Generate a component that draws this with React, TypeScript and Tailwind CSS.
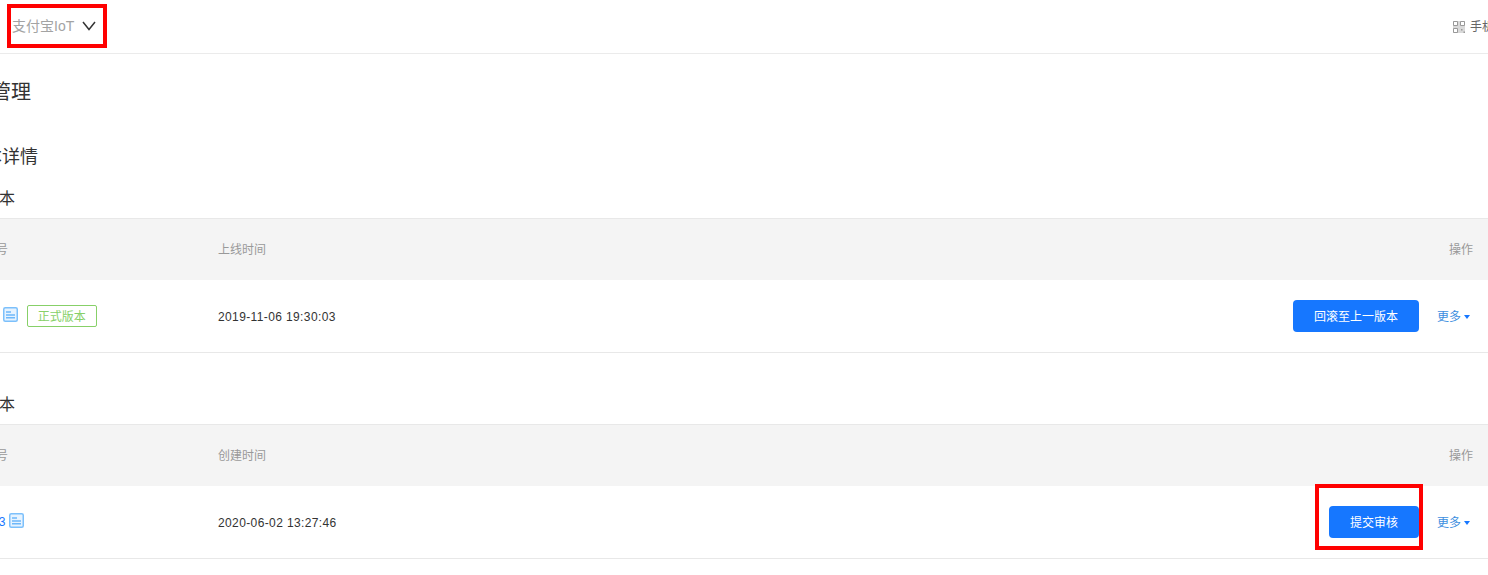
import React from 'react';

const font = { fontFamily: '"Liberation Sans", "Noto Sans CJK SC", sans-serif' };

function DocIcon() {
  return (
    <svg width="15" height="15" viewBox="0 0 15 15" fill="none" className="shrink-0">
      <rect x="0.75" y="0.75" width="13.5" height="13.5" rx="1.5" fill="#e6f3ff" stroke="#7cc0fb" strokeWidth="1.5" />
      <path d="M3 5h5M3 8h9M3 10.7h9" stroke="#6db8fa" strokeWidth="1.4" />
    </svg>
  );
}

function More() {
  return (
    <span className="flex items-center gap-[3px] text-xs text-[#3d8fe0]">
      更多
      <span className="w-0 h-0 border-x-[3px] border-x-transparent border-t-[4px] border-t-[#1677ff] mt-[1px]" />
    </span>
  );
}

function VersionTable({ title, timeLabel, name, time, action, tag, narrow }: {
  title: string; timeLabel: string; name: string; time: string; action: string; tag?: boolean; narrow?: boolean;
}) {
  return (
    <section>
      <h3 className="text-[16px] leading-[24px] text-[#333] pl-[3px]">{title}</h3>
      <div className="mt-[7px] h-[62px] bg-[#f4f4f4] border-t border-[#e8e8e8] flex items-center text-xs text-[#999] pl-[24px] pr-[15px]">
        <span className="w-[246px]">版本号</span>
        <span className="flex-1">{timeLabel}</span>
        <span>操作</span>
      </div>
      <div className="h-[73px] border-b border-[#e8e8e8] flex items-center text-xs text-[#333] pl-[24px] pr-[18px]">
        <div className="w-[246px] flex items-center">
          <span className="text-[#1677ff]">{name}</span>
          <span className="ml-[4px] -mt-[3px]"><DocIcon /></span>
          {tag && (
            <span className="ml-[9px] h-[22px] w-[70px] flex items-center justify-center pt-[1px] border border-[#87d068] rounded-[2px] text-[#87d068]">
              正式版本
            </span>
          )}
        </div>
        <span className="flex-1 tracking-[0.38px] pt-[1px]">{time}</span>
        <button className={`${narrow ? 'w-[90px]' : 'w-[126px]'} h-[32px] pt-[1px] bg-[#1677ff] rounded-[4px] text-white text-xs`}>
          {action}
        </button>
        <span className="ml-[18px] pt-[1px]"><More /></span>
      </div>
    </section>
  );
}

export default function App() {
  return (
    <div className="relative w-[1488px] h-[575px] overflow-hidden bg-white" style={font}>
      <header className="h-[54px] border-b border-[#ebebeb] flex items-center justify-between pl-[12px] -mr-[30px]">
        <div className="flex items-center text-sm text-[#a3a3a3] -mt-[2px]">
          支付宝IoT
          <svg width="14" height="10" viewBox="0 0 14 10" fill="none" className="ml-[8px]">
            <path d="M1 1l6 7.500L13 1" stroke="#333" strokeWidth="1.5" />
          </svg>
        </div>
        <div className="flex items-center text-xs text-[#666]">
          <svg width="12" height="12" viewBox="0 0 12 12" className="mr-[5px]">
            <rect width="12" height="12" fill="#d9d9d9" />
            <path d="M.5.5h4v4h-4zM7.5.5h4v4h-4zM.5 7.5h4v4h-4z" fill="#fff" stroke="#999" />
            <path d="M8 8h1.500v1.500H8zM10.500 10.500H12V12h-1.500z" fill="#999" />
          </svg>
          <span className="w-[48px]">手机预览</span>
        </div>
      </header>
      <div className="-ml-[52px]">
        <h1 className="text-[20px] leading-[28px] text-[#333] pl-[3px] mt-[24px]">版本管理</h1>
        <h2 className="text-[18px] leading-[26px] text-[#333] mt-[38px]">小版本详情</h2>
        <div className="mt-[17px]">
          <VersionTable title="线上版本" timeLabel="上线时间" name="0.0.1" time="2019-11-06 19:30:03" action="回滚至上一版本" tag />
        </div>
        <div className="mt-[40px]">
          <VersionTable title="开发版本" timeLabel="创建时间" name="0.0.13" time="2020-06-02 13:27:46" action="提交审核" narrow />
        </div>
      </div>
      <div className="absolute left-[7px] top-[4px] w-[100px] h-[44px] border-[4px] border-[#f00]" />
      <div className="absolute left-[1315px] top-[484px] w-[108px] h-[66px] border-[4px] border-[#f00]" />
    </div>
  );
}
